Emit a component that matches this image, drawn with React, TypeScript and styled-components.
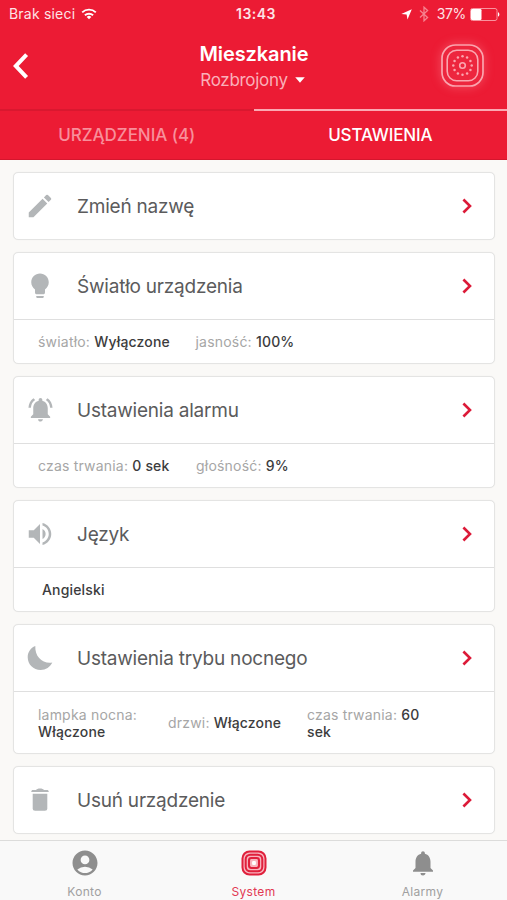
import React from "react";
import styled, { createGlobalStyle, css } from "styled-components";
import {
  MdAccountCircle,
  MdEdit,
  MdNotifications,
  MdNotificationsActive,
  MdVolumeUp,
} from "react-icons/md";

const RED = "#ec1b34";
const ICON = "#b3b6b8";

const GlobalStyle = createGlobalStyle`
  * { box-sizing: border-box; }
  body {
    margin: 0;
    background: #faf9f7;
    font-family: Inter, "Liberation Sans", sans-serif;
    -webkit-font-smoothing: antialiased;
  }
  svg { display: block; flex: none; }
`;

const Screen = styled.div`
  width: 507px;
  height: 900px;
  display: flex;
  flex-direction: column;
  overflow: hidden;
  background: #faf9f7;
`;

const Header = styled.header`
  height: 160px;
  flex: none;
  display: flex;
  flex-direction: column;
  background: ${RED};
  border-bottom: 1px solid #d4162d;
`;

const StatusBar = styled.div`
  height: 28px;
  display: grid;
  grid-template-columns: 1fr auto 1fr;
  align-items: center;
  padding: 0 7px 0 9px;
  color: #fde3e6;
  font-size: 14px;
  line-height: 28px;
`;

const StatusGroup = styled.div<{ $end?: boolean }>`
  display: flex;
  align-items: center;
  justify-content: ${(p) => (p.$end ? "flex-end" : "flex-start")};
`;

const Carrier = styled.span`
  letter-spacing: 0.2px;
  margin-right: 6px;
`;

const Clock = styled.span`
  font-weight: 600;
  letter-spacing: 0.5px;
  padding-left: 3px;
`;

const Percent = styled.span`
  margin: 0 4px 0 8px;
  letter-spacing: -0.35px;
`;

const NavBar = styled.div`
  height: 81px;
  display: grid;
  grid-template-columns: 80px 1fr 80px;
  align-items: center;
`;

const BackButton = styled.button`
  border: 0;
  padding: 2px 0 7px 12px;
  background: none;
  display: flex;
`;

const Heading = styled.div`
  display: flex;
  flex-direction: column;
  align-items: center;
  padding: 0 0 3px 1px;
`;

const Title = styled.h1`
  margin: 0;
  color: #fff;
  font-size: 20px;
  font-weight: 600;
  line-height: 26px;
  letter-spacing: -0.1px;
`;

const ModeButton = styled.div`
  display: flex;
  align-items: center;
  gap: 7px;
  color: #fab0b9;
  font-size: 17px;
  line-height: 26px;
  letter-spacing: -0.3px;
  padding-right: 3px;
`;

const DeviceBadge = styled.div`
  display: flex;
  padding: 0 0 6px 13.5px;

  svg {
    overflow: visible;
    border-radius: 15px;
    background: rgba(255, 255, 255, 0.05);
    box-shadow: 0 0 10px 1px rgba(255, 150, 160, 0.35);
  }
`;

const Tabs = styled.nav`
  flex: 1;
  display: grid;
  grid-template-columns: 1fr 1fr;
`;

const Tab = styled.div<{ $active?: boolean }>`
  display: flex;
  align-items: center;
  justify-content: center;
  border-top: 2px solid ${(p) => (p.$active ? "#fba9b2" : "#d9182f")};
  font-size: 17px;
  font-weight: 500;
  color: ${(p) => (p.$active ? "#fff" : "#f88f9b")};
`;

const TabText = styled.span<{ $tracking: number }>`
  letter-spacing: ${(p) => p.$tracking}px;
`;

const Main = styled.main`
  flex: 1;
  min-height: 0;
  padding: 11.6px 12.5px 0 13px;
  display: flex;
  flex-direction: column;
  gap: 12px;
`;

const Card = styled.section`
  flex: none;
  background: #fff;
  border: 1px solid #e4e4e3;
  border-radius: 5px;
  box-shadow: 0 0 1px rgba(0, 0, 0, 0.08);
`;

const Row = styled.div`
  height: 66px;
  display: grid;
  grid-template-columns: 63px 1fr auto;
  align-items: center;
  padding-right: 21.5px;
`;

const RowIcon = styled.div`
  width: 52px;
  display: flex;
  justify-content: center;
  color: ${ICON};
`;

const RowTitle = styled.h2`
  margin: 0;
  padding-top: 2px;
  color: #5b5b5c;
  font-size: 19px;
  font-weight: 400;
  line-height: 26px;
  letter-spacing: -0.22px;
`;

const Details = styled.div<{ $tall?: boolean; $indent?: boolean }>`
  height: ${(p) => (p.$tall ? 61.5 : 44.3)}px;
  display: flex;
  align-items: center;
  border-top: 1px solid #dfdfdf;
  padding-left: ${(p) => (p.$indent ? 28 : 24)}px;
  font-size: 14px;
  line-height: 17px;
  color: #a6a6a6;
`;

const Detail = styled.div<{ $w?: number }>`
  white-space: pre-wrap;
  letter-spacing: 0.2px;
  ${(p) =>
    p.$w &&
    css`
      width: ${p.$w}px;
    `}
`;

const Value = styled.span`
  color: #3c3c3d;
  font-weight: 450;
  letter-spacing: 0.17px;
`;

const TabBar = styled.footer`
  height: 60.5px;
  flex: none;
  display: grid;
  grid-template-columns: repeat(3, 1fr);
  border-top: 1px solid #dcdcdb;
  background: #f9f9f9;
`;

const TabItem = styled.div<{ $active?: boolean }>`
  display: flex;
  flex-direction: column;
  align-items: center;
  padding-top: 7.5px;
  color: ${(p) => (p.$active ? "#e0203c" : "#8e8e8e")};
`;

const TabLabel = styled.span<{ $active?: boolean }>`
  margin-top: 5.5px;
  font-size: 12px;
  line-height: 16px;
  letter-spacing: 0.3px;
  color: ${(p) => (p.$active ? "#e23a53" : "#a0a0a0")};
`;

const Wifi = () => (
  <svg width="16" height="12" viewBox="0 0 16 12" fill="none" stroke="#fff" strokeWidth="1.9">
    <path d="M1.2 4.4a9.8 9.8 0 0 1 13.6 0" />
    <path d="M3.9 7.3a6 6 0 0 1 8.2 0" />
    <path d="M8 11.3 5.7 9a3.2 3.2 0 0 1 4.6 0z" fill="#fff" stroke="none" />
  </svg>
);

const LocationArrow = () => (
  <svg width="11" height="11" viewBox="0 0 11 11" fill="#fff">
    <path d="M10.8.3 6.5 10.5 5.6 5.5.3 4.9z" />
  </svg>
);

const BluetoothIcon = styled.svg`
  margin-left: 7px;
`;

const BluetoothMark = () => (
  <BluetoothIcon width="10" height="16" viewBox="0 0 10 16" fill="none" stroke="#f6828f" strokeWidth="1.3">
    <path d="M1 4.4 8.6 11.4 5 14.8V1.2L8.6 4.6 1 11.6" />
  </BluetoothIcon>
);

const Battery = () => (
  <svg width="30" height="13" viewBox="0 0 30 13">
    <rect x=".5" y=".5" width="26.5" height="12" rx="2" fill="none" stroke="#f9929e" />
    <rect x="1" y="1" width="10.5" height="11" rx="1.2" fill="#fff" />
    <path d="M28 4.3c1.8.4 1.8 4 0 4.4z" fill="#fff" />
  </svg>
);

const BackChevron = () => (
  <svg width="18" height="28" viewBox="0 0 18 28" fill="none" stroke="#fff" strokeWidth="4">
    <path d="M14.6 2.6 3.8 14l10.8 11.4" />
  </svg>
);

const dots = Array.from({ length: 12 }, (_, i) => {
  const a = (i * Math.PI) / 6;
  return { x: 21.5 + 9.2 * Math.cos(a), y: 21.5 + 9.2 * Math.sin(a) };
});

const DeviceMark = () => (
  <svg width="43" height="43" viewBox="0 0 43 43" fill="none" stroke="#fba5af">
    <rect x="1" y="1" width="41" height="41" rx="13.5" strokeWidth="1.7" />
    <rect x="6.2" y="6.2" width="30.6" height="30.6" rx="9.5" strokeWidth="1.6" />
    <circle cx="21.5" cy="21.5" r="2.8" strokeWidth="1.6" />
    {dots.map((d) => (
      <circle key={`${d.x}-${d.y}`} cx={d.x} cy={d.y} r="1.25" fill="#fba5af" stroke="none" />
    ))}
  </svg>
);

const Bulb = () => (
  <svg width="30" height="30" viewBox="0 0 24 24" fill="currentColor">
    <path d="M9 20.6c0 .55.45 1 1 1h4c.55 0 1-.45 1-1V20H9zM12 2C8.14 2 5 5.14 5 9c0 2.38 1.19 4.47 3 5.74V17c0 .9.45 1.6 1 1.6h6c.55 0 1-.7 1-1.6v-2.26c1.81-1.27 3-3.36 3-5.74 0-3.86-3.14-7-7-7z" />
  </svg>
);

const Moon = () => (
  <svg width="26" height="26" viewBox="0 0 26 26" fill="currentColor">
    <path d="M8.3 1.1C3.6 3 .7 7.3.7 12.3.7 19.4 6.4 25 13.6 25c5.1 0 9.7-2.9 11.7-7.4-9.6 1.5-17.6-5.6-17-16.5z" />
  </svg>
);

const Trash = () => (
  <svg width="18" height="24" viewBox="0 0 18 24" fill="currentColor">
    <path d="M.3 3.6c0-.9.7-1.5 1.6-1.5h3C5.5.9 7.1.4 9 .4s3.5.5 4.1 1.7h3c.9 0 1.6.6 1.6 1.5v.5H.3z" />
    <path d="M1.7 5.7h14.6v14.6a2.5 2.5 0 0 1-2.5 2.5H4.2a2.5 2.5 0 0 1-2.5-2.5z" />
  </svg>
);

const Arrow = () => (
  <svg width="10" height="16" viewBox="0 0 10 16" fill="none" stroke="#dc1a38" strokeWidth="2.6">
    <path d="M1.4 1.5 8 8l-6.6 6.5" />
  </svg>
);

const SystemMark = () => (
  <svg width="30" height="30" viewBox="-2.5 -2.5 30 30" fill="none" stroke="currentColor">
    <rect x="1" y="1" width="23" height="23" rx="7" fill="#f8b4be" strokeWidth="2" />
    <rect x="4.2" y="4.2" width="16.6" height="16.6" rx="4.6" strokeWidth="2" />
    <rect x="7.5" y="7.5" width="10" height="10" rx="2.4" strokeWidth="2.1" />
    <rect x="10.6" y="10.6" width="3.8" height="3.8" rx="1" fill="#fff" stroke="none" />
  </svg>
);

export default function App() {
  return (
    <>
      <GlobalStyle />
      <Screen>
        <Header>
          <StatusBar>
            <StatusGroup>
              <Carrier>Brak sieci</Carrier>
              <Wifi />
            </StatusGroup>
            <Clock>13:43</Clock>
            <StatusGroup $end>
              <LocationArrow />
              <BluetoothMark />
              <Percent>37%</Percent>
              <Battery />
            </StatusGroup>
          </StatusBar>
          <NavBar>
            <BackButton aria-label="Wstecz">
              <BackChevron />
            </BackButton>
            <Heading>
              <Title>Mieszkanie</Title>
              <ModeButton>
                Rozbrojony
                <svg width="10" height="6" viewBox="0 0 10 6" fill="#fff">
                  <path d="M.2.3h9.6L5 5.7z" />
                </svg>
              </ModeButton>
            </Heading>
            <DeviceBadge>
              <DeviceMark />
            </DeviceBadge>
          </NavBar>
          <Tabs>
            <Tab>
              <TabText $tracking={-0.05}>URZĄDZENIA (4)</TabText>
            </Tab>
            <Tab $active>
              <TabText $tracking={-0.15}>USTAWIENIA</TabText>
            </Tab>
          </Tabs>
        </Header>

        <Main>
          <Card>
            <Row>
              <RowIcon><MdEdit size={30} /></RowIcon>
              <RowTitle>Zmień nazwę</RowTitle>
              <Arrow />
            </Row>
          </Card>
          <Card>
            <Row>
              <RowIcon><Bulb /></RowIcon>
              <RowTitle>Światło urządzenia</RowTitle>
              <Arrow />
            </Row>
            <Details>
              <Detail $w={157.5}>światło: <Value>Wyłączone</Value></Detail>
              <Detail>jasność: <Value>100%</Value></Detail>
            </Details>
          </Card>
          <Card>
            <Row>
              <RowIcon><MdNotificationsActive size={29} /></RowIcon>
              <RowTitle>Ustawienia alarmu</RowTitle>
              <Arrow />
            </Row>
            <Details>
              <Detail $w={158}>czas trwania: <Value>0 sek</Value></Detail>
              <Detail>głośność: <Value>9%</Value></Detail>
            </Details>
          </Card>
          <Card>
            <Row>
              <RowIcon><MdVolumeUp size={30} /></RowIcon>
              <RowTitle>Język</RowTitle>
              <Arrow />
            </Row>
            <Details $indent>
              <Detail><Value>Angielski</Value></Detail>
            </Details>
          </Card>
          <Card>
            <Row>
              <RowIcon><Moon /></RowIcon>
              <RowTitle>Ustawienia trybu nocnego</RowTitle>
              <Arrow />
            </Row>
            <Details $tall>
              <Detail $w={130}>lampka nocna:{"\n"}<Value>Włączone</Value></Detail>
              <Detail $w={139}>drzwi: <Value>Włączone</Value></Detail>
              <Detail>czas trwania: <Value>60{"\n"}sek</Value></Detail>
            </Details>
          </Card>
          <Card>
            <Row>
              <RowIcon><Trash /></RowIcon>
              <RowTitle>Usuń urządzenie</RowTitle>
              <Arrow />
            </Row>
          </Card>
        </Main>

        <TabBar>
          <TabItem>
            <MdAccountCircle size={30} />
            <TabLabel>Konto</TabLabel>
          </TabItem>
          <TabItem $active>
            <SystemMark />
            <TabLabel $active>System</TabLabel>
          </TabItem>
          <TabItem>
            <MdNotifications size={30} />
            <TabLabel>Alarmy</TabLabel>
          </TabItem>
        </TabBar>
      </Screen>
    </>
  );
}
